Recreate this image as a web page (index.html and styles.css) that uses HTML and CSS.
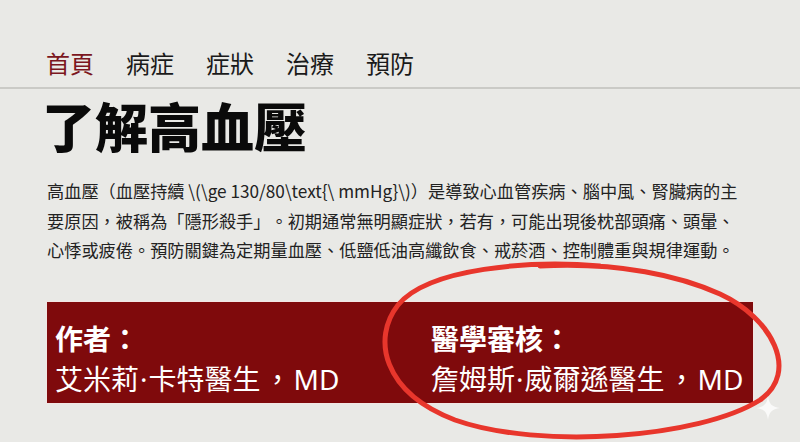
FILE: index.html
```html
<!DOCTYPE html>
<html lang="zh-Hant">
<head>
<meta charset="utf-8">
<title>了解高血壓</title>
<link rel="stylesheet" href="styles.css">
</head>
<body>
<div class="page">
  <nav class="nav">
    <a class="nav-item active">首頁</a>
    <a class="nav-item">病症</a>
    <a class="nav-item">症狀</a>
    <a class="nav-item">治療</a>
    <a class="nav-item">預防</a>
  </nav>
  <main class="content">
    <h1 class="title">了解高血壓</h1>
    <p class="intro">高血壓（血壓持續 \(\ge 130/80\text{\ mmHg}\)）是導致心血管疾病、腦中風、腎臟病的主要原因，被稱為「隱形殺手」。初期通常無明顯症狀，若有，可能出現後枕部頭痛、頭暈、心悸或疲倦。預防關鍵為定期量血壓、低鹽低油高纖飲食、戒菸酒、控制體重與規律運動。</p>
    <section class="credits">
      <div class="credit">
        <div class="credit-label">作者：</div>
        <div class="credit-name">艾米莉<span class="latin dot">·</span>卡特醫生<span class="comma">，</span><span class="latin">MD</span></div>
      </div>
      <div class="credit">
        <div class="credit-label">醫學審核：</div>
        <div class="credit-name">詹姆斯<span class="latin dot">·</span>威爾遜醫生<span class="comma">，</span><span class="latin">MD</span></div>
      </div>
    </section>
  </main>
  <svg class="annotation" width="800" height="442" viewBox="0 0 800 442" aria-hidden="true">
    <path d="M600 266 C 530 260, 428 268, 398 305 C 372 338, 382 392, 455 420 C 540 450, 700 438, 760 400 C 800 372, 772 318, 720 294 C 680 276, 620 262, 540 266" fill="none" stroke="#e8362c" stroke-width="5" stroke-linecap="round"/>
  </svg>
  <svg class="sparkle" width="24" height="24" viewBox="0 0 24 24" aria-hidden="true">
    <path d="M12 0 C 13 8, 16 11, 24 12 C 16 13, 13 16, 12 24 C 11 16, 8 13, 0 12 C 8 11, 11 8, 12 0 Z" fill="#ffffff" fill-opacity="0.75"/>
  </svg>
</div>
</body>
</html>
```

FILE: styles.css
```css
* { box-sizing: border-box; }

html, body {
  margin: 0;
  padding: 0;
}

body {
  background: #e9e9e6;
  font-family: "Noto Sans CJK TC", sans-serif;
  color: #1e1e1e;
  text-spacing-trim: space-all;
}

.page {
  position: relative;
  width: 800px;
  height: 442px;
  overflow: hidden;
}

.nav {
  display: flex;
  gap: 32px;
  padding: 46px 0 8px 46px;
  border-bottom: 2px solid #cacac6;
}

.nav-item {
  font-size: 24px;
  line-height: 33px;
  color: #1a1a1a;
  text-decoration: none;
}

.nav-item.active {
  color: #7b1620;
}

.content {
  padding: 0 46px 0 46px;
}

.title {
  margin: 5px 0 0 -4px;
  font-size: 53px;
  line-height: 62px;
  font-weight: 900;
  color: #0a0a0a;
  letter-spacing: 0;
}

.intro {
  margin: 20px 0 0 1px;
  width: 694px;
  font-size: 17.2px;
  line-height: 29.5px;
  color: #222;
}

.credits {
  margin-top: 36px;
  width: 708px;
  height: 103px;
  background: #7f0a0c;
  border: 1px solid #f2e6e4;
  display: grid;
  grid-template-columns: 376px 1fr;
  padding: 16px 8px 5px 8px;
  color: #fff;
}

.credit-label {
  font-size: 28px;
  line-height: 40px;
  font-weight: 700;
}

.credit-name {
  font-size: 28px;
  line-height: 40px;
  font-weight: 400;
}

.comma {
  display: inline-block;
  width: 1em;
  margin: 0 2px 0 3px;
}

.latin {
  font-family: "Noto Sans", sans-serif;
}

.dot {
  margin: 0 1px;
}

.annotation {
  position: absolute;
  left: 0;
  top: 0;
  pointer-events: none;
}

.sparkle {
  position: absolute;
  left: 756px;
  top: 396px;
}
```
